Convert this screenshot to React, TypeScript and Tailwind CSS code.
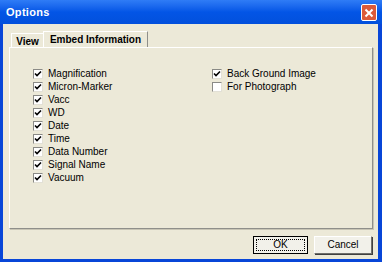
import React from "react";

const leftItems = [
  "Magnification",
  "Micron-Marker",
  "Vacc",
  "WD",
  "Date",
  "Time",
  "Data Number",
  "Signal Name",
  "Vacuum",
];

const rightItems: [string, boolean][] = [
  ["Back Ground Image", true],
  ["For Photograph", false],
];

function Check({ checked, label }: { checked: boolean; label: string }) {
  return (
    <div className="flex items-center h-[13.1px]">
      <div className="w-[10px] h-[10px] bg-white border border-t-[#8a8a86] border-l-[#8a8a86] border-b-[#e2e0d6] border-r-[#e2e0d6] flex items-center justify-center">
        {checked && (
          <svg width="8" height="8" viewBox="0 0 8 8">
            <path d="M1 3.5 L3 5.5 L7 1.5" stroke="#000" strokeWidth="1.6" fill="none" />
          </svg>
        )}
      </div>
      <span className="ml-[5px] text-[10px] leading-none text-black">{label}</span>
    </div>
  );
}

export default function App() {
  return (
    <div
      className="w-[382px] h-[262px] flex flex-col bg-[#0846d8] overflow-hidden"
      style={{ fontFamily: '"Liberation Sans", Arial, sans-serif' }}
    >
      {/* Title bar */}
      <div className="h-[24px] flex items-center justify-between pl-[6px] pr-[5px] bg-gradient-to-b from-[#2f7cf6] via-[#0355e6] to-[#0250dc]">
        <span className="text-white font-bold text-[11px] tracking-[0.3px]">Options</span>
        <div className="w-[16px] h-[17px] mt-[1px] rounded-[2px] border border-white bg-[#dc5a3a] flex items-center justify-center">
          <svg width="10" height="10" viewBox="0 0 10 10">
            <path d="M1.5 1.5 L8.5 8.5 M8.5 1.5 L1.5 8.5" stroke="#fff" strokeWidth="2" />
          </svg>
        </div>
      </div>

      {/* Body */}
      <div className="flex-1 mx-[3px] mb-[3px] mr-[4px] bg-[#ece9d8] flex flex-col">
        {/* Tabs */}
        <div className="flex items-end h-[23px] pl-[8px]">
          <div className="h-[14px] w-[32px] border-t border-l border-white text-[10px] font-bold flex items-center justify-center pt-[1px]">
            View
          </div>
          <div className="h-[16px] w-[105px] border-t border-l border-white border-r border-r-[#8f8f8a] text-[10px] font-bold flex items-center justify-center bg-[#ece9d8]">
            Embed Information
          </div>
        </div>

        {/* Panel */}
        <div className="ml-[6px] mr-[5px] h-[182px] border-t border-l border-white border-r border-b border-r-[#8f8f8a] border-b-[#8f8f8a] shadow-[1px_1px_0_#c8c5b5] pl-[23px] pt-[19px] grid grid-cols-[179px_1fr]">
          <div className="flex flex-col">
            {leftItems.map((t) => (
              <Check key={t} checked label={t} />
            ))}
          </div>
          <div className="flex flex-col">
            {rightItems.map(([t, c]) => (
              <Check key={t} checked={c} label={t} />
            ))}
          </div>
        </div>

        {/* Buttons */}
        <div className="flex justify-end gap-[6px] pr-[6px] mt-[7px]">
          <button className="w-[55px] h-[18px] border border-black bg-[#f2f1ea] flex items-center justify-center p-[2px]">
            <span className="w-full h-full border border-dotted border-black flex items-center justify-center text-[10px] leading-none">
              OK
            </span>
          </button>
          <button className="w-[58px] h-[18px] border border-t-white border-l-white border-b-[#6f6f6a] border-r-[#6f6f6a] shadow-[1px_1px_0_#404040] bg-[#f2f1ea] flex items-center justify-center text-[10px] leading-none">
            Cancel
          </button>
        </div>
      </div>
    </div>
  );
}
